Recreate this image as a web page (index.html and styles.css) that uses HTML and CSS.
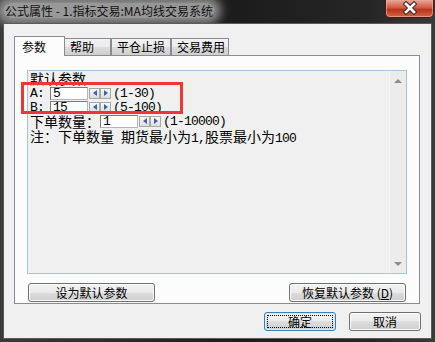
FILE: index.html
```html
<!DOCTYPE html>
<html>
<head>
  <title>公式属性</title>
  <link rel="stylesheet" href="styles.css">
</head>
<body>
  <div class="win">
    <div class="titlebar">
      <span class="title">公式属性 - 1.指标交易:MA均线交易系统</span>
      <svg class="close" width="49" height="18" viewBox="0 0 49 18">
        <defs>
          <linearGradient id="cg" x1="0" y1="0" x2="0" y2="1">
            <stop offset="0" stop-color="#e9a99b"/>
            <stop offset="0.45" stop-color="#d0573e"/>
            <stop offset="0.55" stop-color="#b8341c"/>
            <stop offset="1" stop-color="#d9684a"/>
          </linearGradient>
        </defs>
        <path d="M0.5 0 V13.5 Q0.5 17.5 4.5 17.5 H44.5 Q48.5 17.5 48.5 13.5 V0" fill="url(#cg)" stroke="#4a1810"/>
        <path d="M1.5 0 V13 Q1.5 16.5 5 16.5 H44 Q47.5 16.5 47.5 13 V0" fill="none" stroke="#f0b8a8" stroke-opacity="0.6"/>
        <path d="M21 4 L29 12 M29 4 L21 12" stroke="#3a2a2a" stroke-width="4.6" stroke-linecap="square"/>
        <path d="M21 4 L29 12 M29 4 L21 12" stroke="#fff" stroke-width="2.6" stroke-linecap="square"/>
      </svg>
    </div>

    <div class="client">
      <div class="tabs">
        <div class="tab on">参数</div>
        <div class="tab t2">帮助</div>
        <div class="tab t3">平仓止损</div>
        <div class="tab t4">交易费用</div>
      </div>

      <div class="page">
        <div class="edit">
          <div class="lines">
            <div class="l1">默认参数</div>
            <div class="row">
              <span class="m lbl">A:</span>
              <span class="in"><span class="m">5</span></span>
              <span class="spin"><span class="sb"><i class="lt"></i></span><span class="sb"><i class="rt"></i></span></span>
              <span class="m rng">(1-30)</span>
            </div>
            <div class="row">
              <span class="m lbl">B:</span>
              <span class="in"><span class="m">15</span></span>
              <span class="spin"><span class="sb"><i class="lt"></i></span><span class="sb"><i class="rt"></i></span></span>
              <span class="m rng">(5-100)</span>
            </div>
            <div class="row r3">
              <span>下单数量：</span>
              <span class="in"><span class="m">1</span></span>
              <span class="spin"><span class="sb"><i class="lt"></i></span><span class="sb"><i class="rt"></i></span></span>
              <span class="m rng">(1-10000)</span>
            </div>
            <div class="note">注：下单数量<span class="m"> </span>期货最小为<span class="m">1,</span>股票最小为<span class="m">100</span></div>
          </div>
          <div class="vscroll">
            <i class="up"></i>
            <i class="dn"></i>
          </div>
        </div>

        <div class="pbtns">
          <div class="btn b1">设为默认参数</div>
          <div class="btn b2">恢复默认参数 (<u>D</u>)</div>
        </div>
      </div>

      <div class="dbtns">
        <div class="btn def">确定</div>
        <div class="btn">取消</div>
      </div>
    </div>

    <div class="mark"></div>
  </div>
</body>
</html>
```

FILE: styles.css
```css
* {
  box-sizing: border-box;
}

body {
  margin: 0;
  width: 435px;
  height: 342px;
  overflow: hidden;
  font-family: "Noto Sans CJK SC", sans-serif;
  font-size: 12px;
  color: #000;
}

.win {
  position: relative;
  width: 435px;
  height: 342px;
  padding: 0 3px 3px;
  display: flex;
  flex-direction: column;
  background: linear-gradient(to right, #3a3a3a, #1c1c1c 55%, #262626 85%, #3a3a3a);
}

/* title bar */
.titlebar {
  height: 23px;
  display: flex;
  justify-content: space-between;
  align-items: flex-start;
}

.title {
  margin-top: 3px;
  padding: 0 2px;
  line-height: 15px;
  font-size: 12px;
  color: #111;
  background: rgba(170, 170, 170, 0.85);
  border-radius: 8px;
  box-shadow: 0 0 10px 6px rgba(170, 170, 170, 0.8);
}

.close {
  display: block;
  margin-right: -2px;
}

/* client area */
.client {
  flex: 1;
  background: #f0f0f0;
  border: 1px solid #5a5a5a;
  padding: 12px 10px 0 10px;
  display: flex;
  flex-direction: column;
}

.tabs {
  height: 20px;
  margin-bottom: -1px;
  display: flex;
  align-items: flex-end;
  position: relative;
  z-index: 1;
}

.tab {
  height: 17px;
  margin-bottom: 1px;
  border: 1px solid #898c95;
  border-bottom: none;
  background: linear-gradient(#f2f2f2, #ebebeb 50%, #dddddd 50%, #cfcfcf);
  padding-left: 5px;
  line-height: 15px;
  font-size: 12px;
}

.tab.on {
  height: 20px;
  margin-bottom: 0;
  width: 51px;
  padding-left: 7px;
  padding-top: 2px;
  background: #fcfcfc;
}

.t2 {
  width: 47px;
  margin-left: -1px;
}

.t3 {
  width: 60px;
}

.t4 {
  width: 58px;
}

.page {
  width: 406px;
  height: 249px;
  border: 1px solid #898c95;
  background: #fcfcfc;
  padding: 14px 0 0 12px;
}

.edit {
  width: 380px;
  height: 204px;
  border: 1px solid #a7c4de;
  background: #f0f0f0;
  display: flex;
}

.lines {
  flex: 1;
  padding: 0 0 0 2px;
  font-size: 14px;
  line-height: 14px;
}

.m {
  font-family: "Liberation Mono", monospace;
  font-size: 13px;
  line-height: 13px;
  letter-spacing: -0.8px;
}

.l1 {
  height: 15px;
}

.row {
  height: 14px;
  line-height: 14px;
  display: flex;
  align-items: center;
}

.lbl {
  width: 20px;
}

.in {
  width: 38px;
  height: 13px;
  background: #fff;
  border: 1px solid #b5b5b5;
  border-top-color: #7a7a7a;
  border-left-color: #7a7a7a;
  padding-left: 2px;
  display: flex;
  align-items: center;
  overflow: hidden;
}

.spin {
  display: flex;
  margin-left: 1px;
}

.sb {
  width: 11px;
  height: 11px;
  border: 1px solid #a8a8a8;
  background: linear-gradient(#f8f8f8, #dcdcdc);
  display: flex;
  align-items: center;
  justify-content: center;
}

.lt {
  border-style: solid;
  border-width: 3px 4px 3px 0;
  border-color: transparent #3d62a8 transparent transparent;
}

.rt {
  border-style: solid;
  border-width: 3px 0 3px 4px;
  border-color: transparent transparent transparent #3d62a8;
}

.rng {
  margin-left: 2px;
}

.note {
  height: 15px;
  margin-top: 1px;
}

.vscroll {
  width: 17px;
  background: #ececec;
  border-left: 1px solid #f6f6f6;
  display: flex;
  flex-direction: column;
  justify-content: space-between;
  align-items: center;
  padding: 8px 0 7px;
}

.up {
  border-style: solid;
  border-width: 0 4px 4px;
  border-color: transparent transparent #8c8c8c;
}

.dn {
  border-style: solid;
  border-width: 4px 4px 0;
  border-color: #8c8c8c transparent transparent;
}

/* buttons */
.btn {
  position: relative;
  width: 72px;
  height: 19px;
  border: 1px solid #707070;
  border-radius: 3px;
  background: linear-gradient(#f2f2f2, #ebebeb 50%, #dddddd 50%, #cfcfcf);
  box-shadow: inset 0 0 0 1px #fbfbfb;
  display: flex;
  align-items: center;
  justify-content: center;
  font-size: 12px;
}

.pbtns {
  margin-top: 9px;
  padding: 0 13px 0 1px;
  display: flex;
  justify-content: space-between;
}

.b1 {
  width: 127px;
}

.b2 {
  width: 117px;
}

.dbtns {
  margin-top: 8px;
  display: flex;
  justify-content: flex-end;
  gap: 13px;
}

.def {
  border-color: #3c7fb1;
  box-shadow: inset 0 0 0 1px #cfe9f9;
}

.def::after {
  content: "";
  position: absolute;
  inset: 2px;
  border: 1px dotted #000;
}

/* annotation box over the first two parameters */
.mark {
  position: absolute;
  left: 21px;
  top: 82px;
  width: 162px;
  height: 32px;
  border: 3px solid #ef3535;
}
```
